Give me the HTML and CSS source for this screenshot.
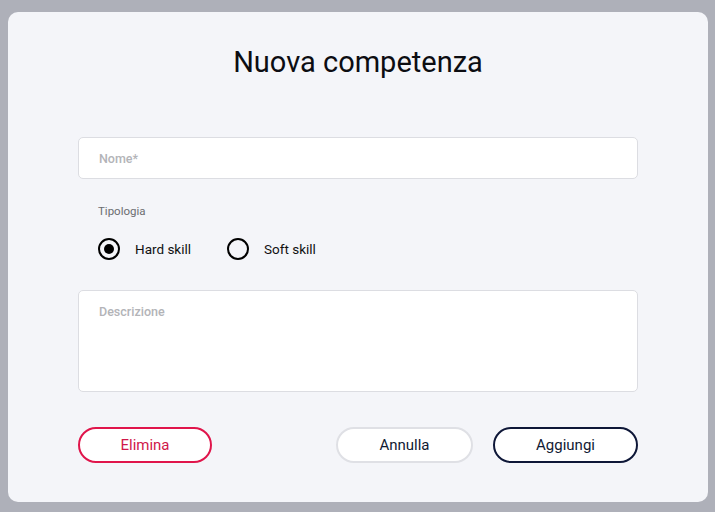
FILE: index.html
```html
<!DOCTYPE html>
<html lang="it">
<head>
<meta charset="utf-8">
<title>Nuova competenza</title>
<link rel="stylesheet" href="styles.css">
</head>
<body>
<div class="overlay">
  <div class="modal">
    <h1 class="title">Nuova competenza</h1>
    <div class="field input">
      <span class="placeholder">Nome*</span>
    </div>
    <div class="label">Tipologia</div>
    <div class="radios">
      <label class="radio"><span class="circle checked"></span><span>Hard skill</span></label>
      <label class="radio"><span class="circle"></span><span>Soft skill</span></label>
    </div>
    <div class="field textarea">
      <span class="placeholder">Descrizione</span>
    </div>
    <div class="actions">
      <button class="btn danger">Elimina</button>
      <div class="right">
        <button class="btn secondary">Annulla</button>
        <button class="btn primary">Aggiungi</button>
      </div>
    </div>
  </div>
</div>
</body>
</html>
```

FILE: styles.css
```css
html, body {
  margin: 0;
  padding: 0;
  height: 100%;
}
body {
  background: #aeb0b9;
  font-family: Roboto, "Liberation Sans", sans-serif;
}
.overlay {
  padding: 12px 7px 10px 8px;
}
.modal {
  box-sizing: border-box;
  width: 700px;
  height: 490px;
  background: #f4f5f9;
  border-radius: 10px;
  padding: 30px 70px 0 70px;
  display: flex;
  flex-direction: column;
}
.title {
  margin: 0;
  text-align: center;
  font-weight: 400;
  font-size: 29px;
  line-height: 40px;
  color: #0c0d12;
}
.field {
  box-sizing: border-box;
  background: #fff;
  border: 1px solid #dcdde2;
  border-radius: 5px;
  padding: 0 20px;
}
.input {
  margin-top: 55px;
  height: 42px;
  display: flex;
  align-items: center;
}
.placeholder {
  color: #b3b4b8;
  font-size: 12.5px;
  font-weight: 500;
}
.label {
  margin-top: 25px;
  margin-left: 20px;
  font-size: 11.5px;
  line-height: 14px;
  color: #6b6c70;
}
.radios {
  margin-top: 20px;
  margin-left: 20px;
  display: flex;
  gap: 36px;
  font-size: 13.5px;
  color: #111;
}
.radio {
  display: flex;
  align-items: center;
  gap: 15px;
}
.circle {
  box-sizing: border-box;
  width: 22px;
  height: 22px;
  border: 2px solid #000;
  border-radius: 50%;
  display: flex;
  align-items: center;
  justify-content: center;
}
.circle.checked::after {
  content: "";
  width: 10px;
  height: 10px;
  border-radius: 50%;
  background: #000;
}
.textarea {
  margin-top: 30px;
  height: 102px;
  padding-top: 10px;
}
.actions {
  margin-top: 35px;
  display: flex;
  justify-content: space-between;
}
.right {
  display: flex;
  gap: 20px;
}
.btn {
  box-sizing: border-box;
  height: 36px;
  border-radius: 18px;
  border: 2px solid;
  background: #fff;
  font-family: Roboto, "Liberation Sans", sans-serif;
  font-size: 15px;
  padding: 0;
}
.danger {
  width: 134px;
  border-color: #e0154b;
  color: #d0174a;
}
.secondary {
  width: 137px;
  border-color: #dfe0e5;
  color: #111a33;
}
.primary {
  width: 145px;
  border-color: #0e1738;
  color: #111a33;
}
```
